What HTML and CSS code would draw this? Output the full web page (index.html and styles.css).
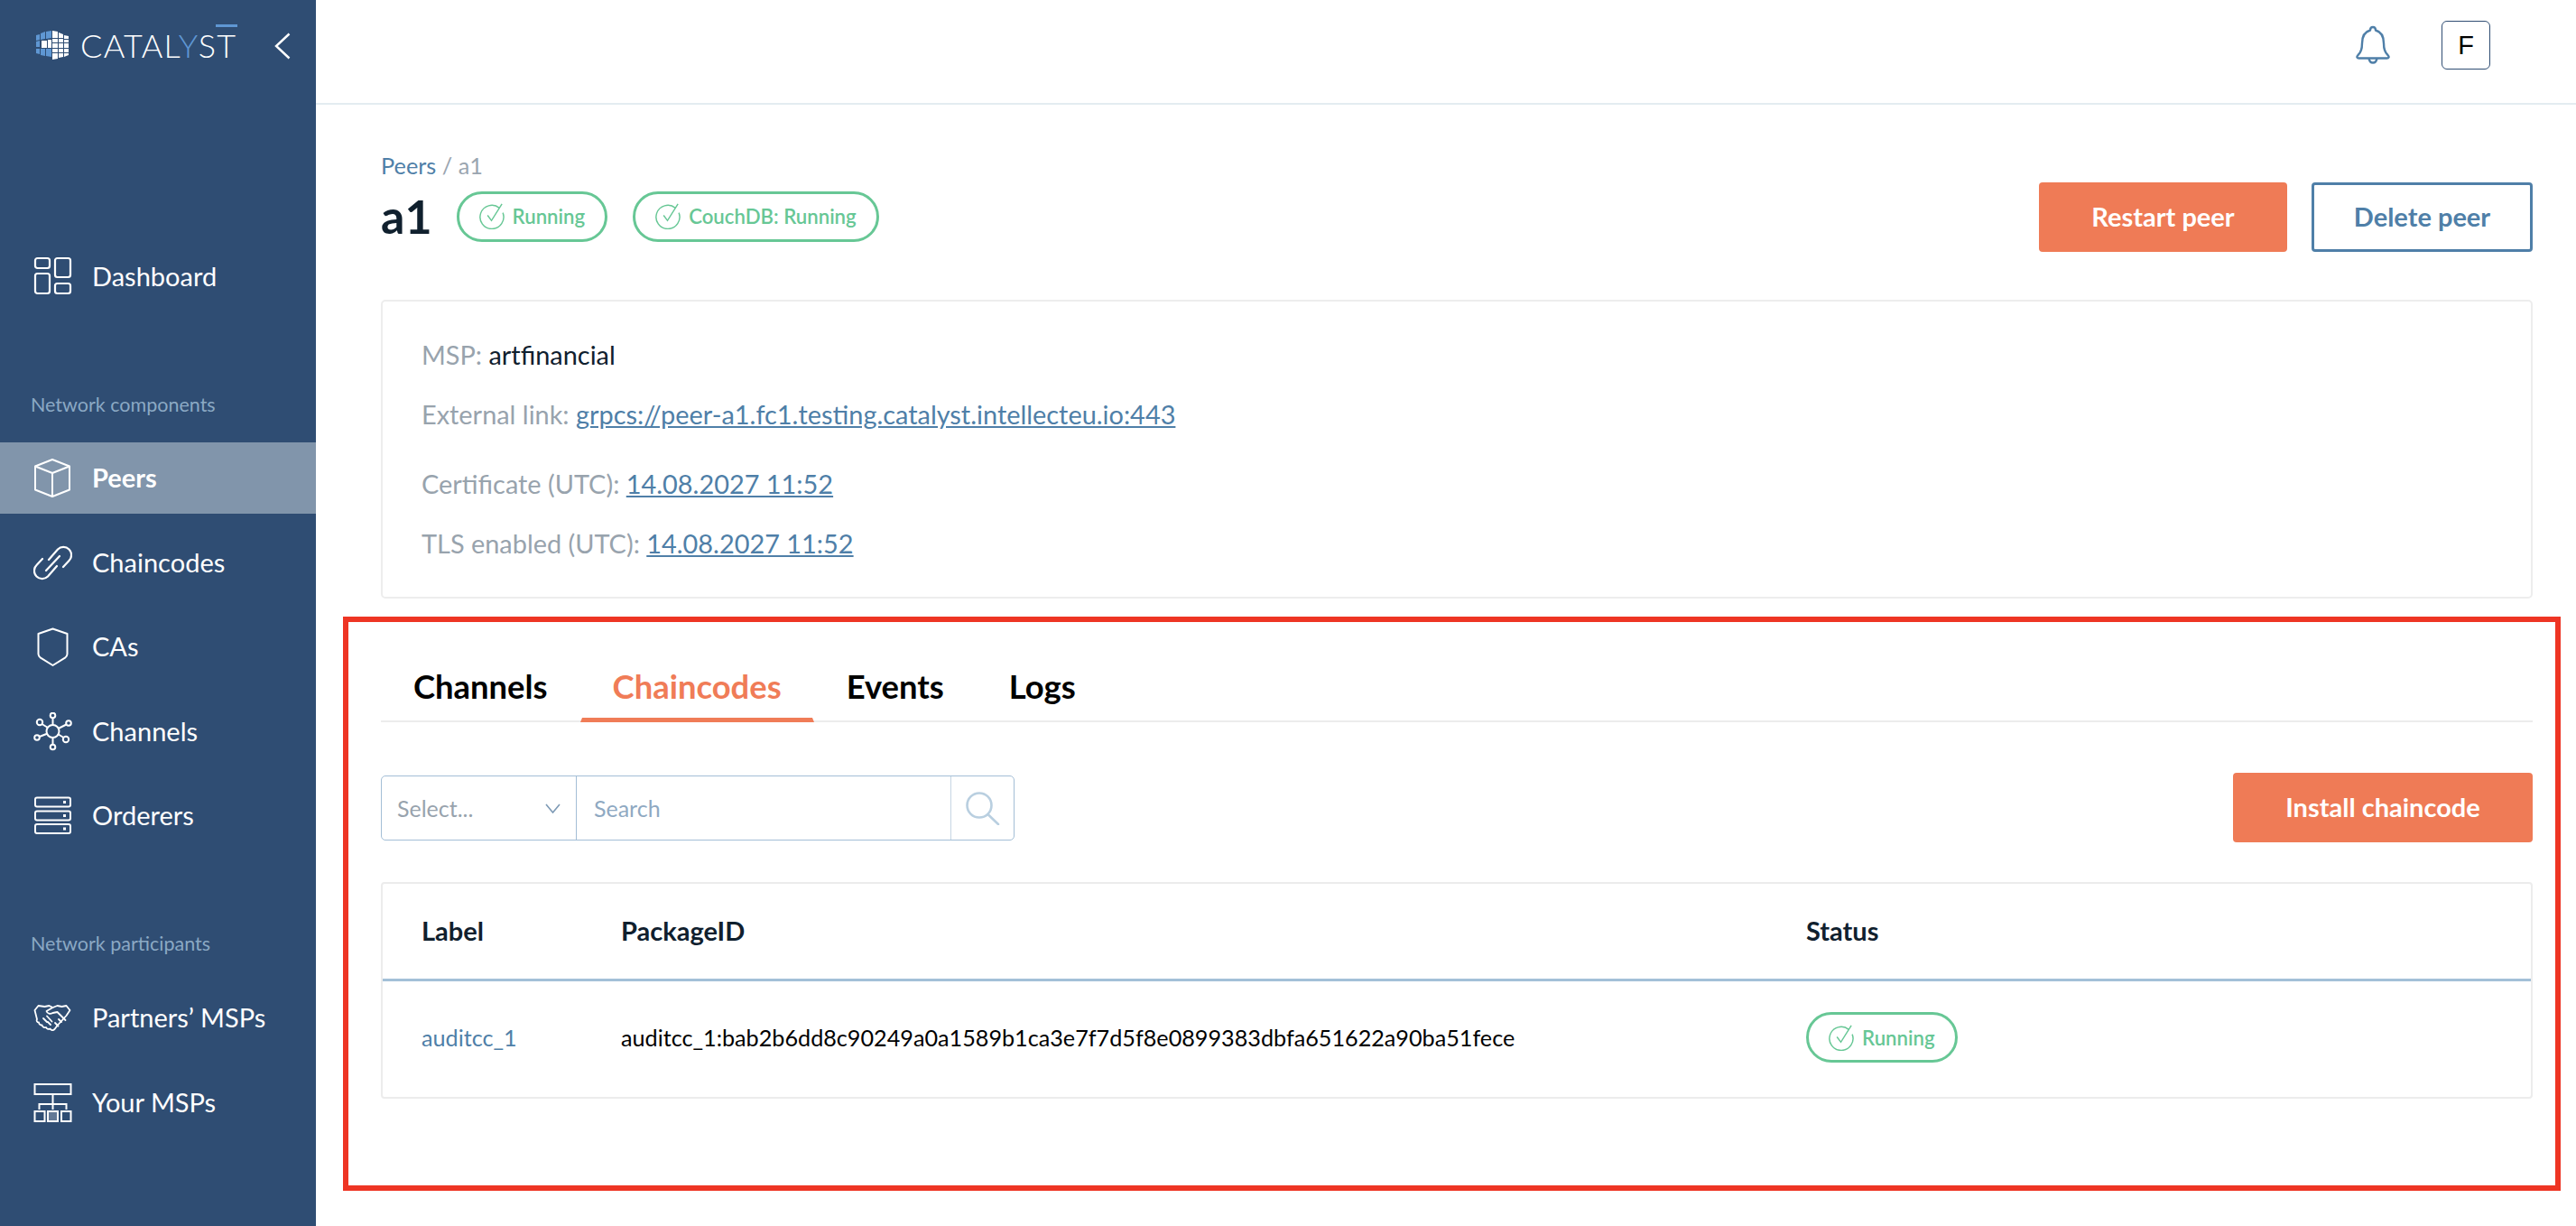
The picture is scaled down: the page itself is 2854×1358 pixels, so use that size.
FILE: index.html
```html
<!DOCTYPE html>
<html lang="en">
<head>
<meta charset="utf-8">
<title>Catalyst - Peer a1</title>
<link rel="stylesheet" href="styles.css">
</head>
<body>
<div class="app">
  <aside class="sidebar">
    <div class="brand">
      <svg class="brand-mark" viewBox="0 0 38 33" width="38" height="33">
        <g fill="#5f97d3">
          <path d="M1 6l4-1v6l-4 1zM6 4l5-2v8l-5 1zM12 2l6-1v8l-6 1zM1 13l4-1v7H1zM1 21h4v6l-4-1zM6 21h5v8l-5-1zM12 21h6v9l-6-1z"/>
        </g>
        <g fill="#fff">
          <path d="M7 12h6v8H7zM14 11h4v9h-4zM19 1l6 1v7h-6zM26 3l5 2v4h-5zM32 6l5 1v3h-5zM19 10h6v4h-6zM26 10h5v4h-5zM32 11h5v3h-5zM19 15h6v5h-6zM26 15h5v5h-5zM32 15h5v5h-5zM19 21h6v4h-6zM26 21h5v4h-5zM32 21h5v4h-5zM19 26h6v6l-6 1zM26 26h5v4l-5 1zM32 26h5v2l-5 2z"/>
        </g>
      </svg>
      <span class="brand-name">CATAL<span class="brand-y">Y</span>S<span class="brand-t">T</span></span>
      <svg class="brand-toggle" viewBox="0 0 18 30" width="18" height="30"><path d="M16.5 1.5L2 15l14.500 13.500" fill="none" stroke="#fff" stroke-width="2.400"/></svg>
    </div>

    <nav class="nav nav-main">
      <a class="nav-item">
        <svg class="nav-icon" viewBox="0 0 43 43"><g fill="none" stroke="#fff" stroke-width="2.200"><rect x="2" y="2" width="16" height="11" rx="2.500"/><rect x="24" y="2" width="17" height="21" rx="2.500"/><rect x="2" y="19" width="16" height="22" rx="2.500"/><rect x="24" y="30" width="17" height="11" rx="2.500"/></g></svg>
        <span>Dashboard</span>
      </a>
    </nav>

    <div class="nav-label nav-label-first">Network components</div>
    <nav class="nav">
      <a class="nav-item is-active">
        <svg class="nav-icon" viewBox="0 0 43 43"><g fill="none" stroke="#fff" stroke-width="2" stroke-linejoin="round"><path d="M21 1l19 7.500v26L21 42 2 34.500v-26z"/><path d="M2 8.500L21 16l19-7.500M21 16v26"/></g></svg>
        <span>Peers</span>
      </a>
      <a class="nav-item">
        <svg class="nav-icon" viewBox="0 0 43 43"><g fill="none" stroke="#fff" stroke-width="2.200" stroke-linecap="round"><path d="M17 18L27 6.500A8.800 8.800 0 0 1 39.500 19L33 26"/><path d="M14 30L29 14"/><path d="M26 25L16 36.500A8.800 8.800 0 0 1 3.500 24L10 17"/></g></svg>
        <span>Chaincodes</span>
      </a>
      <a class="nav-item">
        <svg class="nav-icon" viewBox="0 0 43 43"><path d="M21.500 1.500L37.500 7v22.500c0 2-1 3-2.500 4.200L21.500 42 8 33.700c-1.500-1.200-2.500-2.200-2.500-4.200V7z" fill="none" stroke="#fff" stroke-width="2" stroke-linejoin="round"/></svg>
        <span>CAs</span>
      </a>
      <a class="nav-item">
        <svg class="nav-icon" viewBox="0 0 43 43"><g fill="none" stroke="#fff" stroke-width="2"><circle cx="21.500" cy="21" r="7"/><circle cx="21.500" cy="3.500" r="2.800"/><circle cx="21.500" cy="38.500" r="2.800"/><circle cx="7" cy="11" r="3.200"/><circle cx="39" cy="12" r="2.800"/><circle cx="4" cy="28" r="2.800"/><circle cx="36" cy="30" r="3.200"/><path d="M21.500 6.300V14M21.500 28v7.700M9.500 13l6.500 4M36.500 13.500L27.500 18M6.700 27l9-3.500M33.500 28l-6.500-4"/></g></svg>
        <span>Channels</span>
      </a>
      <a class="nav-item">
        <svg class="nav-icon" viewBox="0 0 43 43"><g fill="none" stroke="#fff" stroke-width="2"><rect x="2" y="1.500" width="39" height="10" rx="2"/><rect x="2" y="16.500" width="39" height="10" rx="2"/><rect x="2" y="31" width="39" height="10" rx="2"/></g><g fill="#fff"><rect x="33" y="5" width="3" height="3"/><rect x="33" y="20" width="3" height="3"/><rect x="33" y="34.500" width="3" height="3"/></g></svg>
        <span>Orderers</span>
      </a>
    </nav>

    <div class="nav-label nav-label-second">Network participants</div>
    <nav class="nav">
      <a class="nav-item">
        <svg class="nav-icon" viewBox="0 0 43 43"><g fill="none" stroke="#fff" stroke-width="1.800" stroke-linejoin="round" stroke-linecap="round"><path d="M1.500 13l4-5 7 1 5-1 4 2 5-2 5 1 5-1 4 5-4 6-10 11-3 4c-2 2-4 1-5-.5-2 1-4 0-4.500-1.500-2 .5-4-.5-4.500-2.500-2 0-3.500-1.500-3.500-3-2 0-3-2-2-3.500z"/><path d="M21.500 10l-7 4c1 3 4 3.500 7 2l5-1 9 9M11 22l4 4M15 19.500l5.500 6M19 29l-3-3M24 27l3.500 3.500M28 23l3 3"/></g></svg>
        <span>Partners’ MSPs</span>
      </a>
      <a class="nav-item">
        <svg class="nav-icon" viewBox="0 0 43 43"><g fill="none" stroke="#fff" stroke-width="2"><rect x="1.500" y="1" width="40" height="11"/><rect x="1.500" y="31" width="11" height="11"/><rect x="16" y="31" width="11" height="11" fill="rgba(255,255,255,.25)"/><rect x="31" y="31" width="10.500" height="11"/><path d="M21.500 12v17M6.500 29v-6h30v6"/></g></svg>
        <span>Your MSPs</span>
      </a>
    </nav>
  </aside>

  <div class="main">
    <header class="topbar">
      <svg class="bell" viewBox="0 0 38 43" width="38" height="43"><path d="M19 2c2 0 3 1.500 3 3.500C29 7.500 31 13 31 20c0 6 1 10 4.500 13 2 2 1 3.500-1 3.500h-31c-2 0-3-1.500-1-3.500C6 30 7 26 7 20 7 13 9 7.500 16 5.500 16 3.500 17 2 19 2zM14.500 36.500c.5 3.500 2 5 4.500 5s4-1.500 4.500-5" fill="none" stroke="#4f7fa8" stroke-width="2.400" stroke-linejoin="round"/></svg>
      <div class="avatar">F</div>
    </header>

    <main class="content">
      <div class="breadcrumb"><a class="crumb-link">Peers</a> / a1</div>
      <div class="title-row">
        <div class="title-group">
          <h1 class="title">a1</h1>
          <span class="badge">
            <svg class="badge-icon" viewBox="0 0 30 30"><g fill="none" stroke="#67c795" stroke-width="1.500"><path d="M23 5.500A13.500 13.500 0 1 0 27 11"/><path d="M9.500 14l4.500 6L26 1"/></g></svg>
            Running
          </span>
          <span class="badge">
            <svg class="badge-icon" viewBox="0 0 30 30"><g fill="none" stroke="#67c795" stroke-width="1.500"><path d="M23 5.500A13.500 13.500 0 1 0 27 11"/><path d="M9.500 14l4.500 6L26 1"/></g></svg>
            CouchDB: Running
          </span>
        </div>
        <div class="title-actions">
          <button class="btn btn-primary btn-restart">Restart peer</button>
          <button class="btn btn-outline">Delete peer</button>
        </div>
      </div>

      <section class="info-card">
        <p class="info-row"><span class="info-key">MSP:</span> artfinancial</p>
        <p class="info-row"><span class="info-key">External link:</span> <a class="info-link">grpcs://peer-a1.fc1.testing.catalyst.intellecteu.io:443</a></p>
        <p class="info-row info-row-spaced"><span class="info-key">Certificate (UTC):</span> <a class="info-link">14.08.2027 11:52</a></p>
        <p class="info-row"><span class="info-key">TLS enabled (UTC):</span> <a class="info-link">14.08.2027 11:52</a></p>
      </section>

      <div class="tabs">
        <a class="tab">Channels</a>
        <a class="tab is-active">Chaincodes</a>
        <a class="tab">Events</a>
        <a class="tab">Logs</a>
      </div>

      <div class="toolbar">
        <div class="filter">
          <div class="filter-select">
            <span>Select...</span>
            <svg viewBox="0 0 17 11" width="17" height="11"><path d="M1 1l7.500 9L16 1" fill="none" stroke="#7d9ab5" stroke-width="1.600"/></svg>
          </div>
          <div class="filter-search">Search</div>
          <div class="filter-button">
            <svg viewBox="0 0 38 37" width="38" height="37"><g fill="none" stroke="#b9cfe0" stroke-width="2.600"><circle cx="15" cy="15" r="13.500"/><path d="M24.500 25L36 36" stroke-linecap="round"/></g></svg>
          </div>
        </div>
        <button class="btn btn-primary btn-install">Install chaincode</button>
      </div>

      <section class="table">
        <div class="table-row table-head">
          <div>Label</div>
          <div>PackageID</div>
          <div>Status</div>
        </div>
        <div class="table-row table-body">
          <div><a class="cell-link">auditcc_1</a></div>
          <div>auditcc_1:bab2b6dd8c90249a0a1589b1ca3e7f7d5f8e0899383dbfa651622a90ba51fece</div>
          <div>
            <span class="badge">
              <svg class="badge-icon" viewBox="0 0 30 30"><g fill="none" stroke="#67c795" stroke-width="1.500"><path d="M23 5.500A13.500 13.500 0 1 0 27 11"/><path d="M9.500 14l4.500 6L26 1"/></g></svg>
              Running
            </span>
          </div>
        </div>
      </section>
    </main>
  </div>
</div>
<div class="annotation"></div>
</body>
</html>
```
FILE: styles.css
```css
* { box-sizing: border-box; }
html, body { margin: 0; padding: 0; height: 100%; }
body {
  font-family: "Lato", "Liberation Sans", sans-serif;
  color: #10202e;
  background: #fff;
  overflow: hidden;
  position: relative;
}
.app { display: flex; height: 1358px; }

/* Sidebar */
.sidebar {
  flex: 0 0 350px;
  width: 350px;
  background: #2f4d73;
  color: #fff;
  display: flex;
  flex-direction: column;
}
.brand {
  display: flex;
  align-items: flex-start;
  height: 266px;
  padding: 33px 0 0 39px;
}
.brand-mark { flex: none; }
.brand-name {
  margin-left: 12px;
  font-size: 36px;
  font-weight: 300;
  line-height: 32px;
  letter-spacing: 1.300px;
  white-space: nowrap;
  width: 172px;
  position: relative;
  top: 1px;
}
.brand-y { color: #5f97d3; }
.brand-t { position: relative; }
.brand-t::before {
  content: "";
  position: absolute;
  left: -1px;
  right: 0;
  top: -1px;
  height: 3px;
  background: #5f97d3;
}
.brand-toggle { margin: 3px 0 0 43px; flex: none; }

.nav { display: flex; flex-direction: column; gap: 14.6px; }
.nav-item {
  display: flex;
  align-items: center;
  gap: 22px;
  height: 79px;
  padding-left: 37px;
  font-size: 29px;
  color: #fff;
}
.nav-item span { margin-bottom: 2px; }
.nav-main .nav-item span { margin-bottom: 0; }
.nav-item.is-active { background: #8195ab; font-weight: 700; }
.nav-icon { width: 43px; height: 43px; flex: none; }
.nav-label {
  font-size: 21.500px;
  line-height: 30px;
  color: #8ba9c4;
  padding-left: 34px;
}
.nav-label-first { margin-top: 88px; margin-bottom: 27px; }
.nav-label-second { margin-top: 87px; margin-bottom: 28px; }

/* Main */
.main { flex: 1; min-width: 0; display: flex; flex-direction: column; }
.topbar {
  height: 116px;
  border-bottom: 2px solid #e3ecf1;
  display: flex;
  justify-content: flex-end;
  align-items: flex-start;
  padding: 23px 95px 0 0;
}
.bell { margin: 5px 57px 0 0; }
.avatar {
  width: 54px;
  height: 54px;
  border: 1.500px solid #2f4d73;
  border-radius: 6px;
  display: flex;
  align-items: center;
  justify-content: center;
  font-family: "Liberation Sans", sans-serif;
  font-size: 29px;
  color: #000;
}
.content { padding: 52px 48px 0 72px; }
.breadcrumb { font-size: 25.300px; line-height: 30px; color: #9aa5b0; }
.crumb-link { color: #4f7fa8; }
.title-row {
  display: flex;
  justify-content: space-between;
  align-items: center;
  margin-top: 4px;
  height: 77px;
}
.title-group { display: flex; align-items: center; padding-bottom: 2px; }
.title { margin: 0 27px 2px 0; font-size: 52px; font-weight: 700; line-height: 56px; color: #10202e; }
.title-group .badge + .badge { margin-left: 28px; }
.title-actions { display: flex; gap: 27px; }
.badge {
  display: inline-flex;
  align-items: center;
  gap: 8px;
  height: 56px;
  padding: 0 22px;
  border: 3px solid #67c795;
  border-radius: 28px;
  color: #67c795;
  font-size: 22.200px;
  font-weight: 600;
  white-space: nowrap;
}
.badge-icon { width: 29px; height: 29px; flex: none; }
.btn {
  font-family: inherit;
  font-size: 29px;
  font-weight: 700;
  border-radius: 4px;
  cursor: pointer;
  display: block;
  height: 77px;
  padding: 0 0 3px;
}
.btn-primary { background: #ef7b56; color: #fff; border: 0; }
.btn-restart { width: 275px; }
.btn-install { width: 332px; }
.btn-outline { width: 245px; background: #fff; color: #4f7fa8; border: 3px solid #4f7fa8; }

/* Info card */
.info-card {
  margin-top: 53px;
  height: 331px;
  border: 2px solid #ededed;
  border-radius: 5px;
  padding: 41px 0 0 43px;
  font-size: 28.900px;
  line-height: 36px;
  color: #10202e;
}
.info-row { margin: 0 0 30px; }
.info-row-spaced { margin-top: 41px; }
.info-key { color: #98a3ad; }
.info-link { color: #4f7fa8; text-decoration: underline; }

/* Tabs */
.tabs {
  display: flex;
  margin-top: 62px;
  height: 75px;
  border-bottom: 2px solid #ececec;
}
.tab {
  height: 75px;
  padding: 0 34px;
  border-left: 2px solid transparent;
  border-right: 2px solid transparent;
  border-bottom: 5px solid transparent;
  display: flex;
  align-items: center;
  font-size: 36.400px;
  font-weight: 700;
  color: #000;
}
.tab.is-active { color: #f07c57; border-bottom-color: #f07c57; }

/* Toolbar */
.toolbar {
  display: flex;
  justify-content: space-between;
  align-items: flex-start;
  margin-top: 56px;
}
.filter {
  display: flex;
  width: 702px;
  height: 72px;
  margin-top: 3px;
  border: 1px solid #a3bed6;
  border-radius: 5px;
  font-size: 25px;
}
.filter-select {
  flex: 0 0 216px;
  border-right: 1px solid #a3bed6;
  display: flex;
  align-items: center;
  justify-content: space-between;
  padding: 0 17px 0 17px;
  color: #98a3ad;
}
.filter-search {
  flex: 1;
  display: flex;
  align-items: center;
  padding-left: 19px;
  color: #8fa9c2;
  border-right: 1px solid #c6d6e3;
}
.filter-button {
  flex: 0 0 69px;
  display: flex;
  align-items: center;
  justify-content: center;
}

/* Table */
.table {
  margin-top: 44px;
  height: 240px;
  border: 2px solid #ececec;
  border-radius: 4px;
}
.table-row {
  display: grid;
  grid-template-columns: 221px 1313px 1fr;
  align-items: center;
  padding-left: 43px;
}
.table-head {
  height: 108px;
  border-bottom: 3px solid #a3c0d8;
  padding-bottom: 2px;
  font-size: 29px;
  font-weight: 700;
  color: #10202e;
}
.table-body { height: 128px; padding-bottom: 4px; font-size: 25.200px; color: #000; }
.cell-link { color: #4f7fa8; }

/* Review annotation drawn over the screenshot */
.annotation {
  position: absolute;
  left: 380px;
  top: 683px;
  width: 2457px;
  height: 636px;
  border: 6px solid #ee3524;
  pointer-events: none;
}
```
